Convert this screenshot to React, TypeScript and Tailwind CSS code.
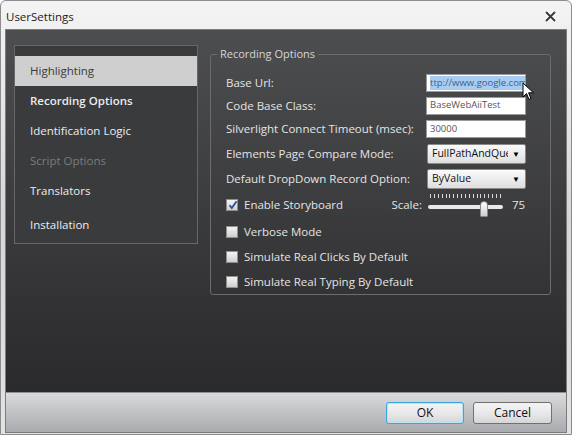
import React from 'react'

const font = { fontFamily: '"Open Sans", "Noto Sans", sans-serif' }

// Pequeña casilla de verificación estilo WPF
function Check({ checked }: { checked?: boolean }) {
  return (
    <span className="relative flex h-[12px] w-[12px] shrink-0 items-center justify-center border border-[#8f8f8f] bg-gradient-to-b from-[#f4f4f4] to-[#cfcfcf]">
      {checked && (
        <svg width="10" height="10" viewBox="0 0 10 10" className="absolute left-[1px] top-[0px]">
          <path d="M1.5 5.2 L3.8 8 L8.6 1.2" fill="none" stroke="#2a4aa8" strokeWidth="1.8" />
        </svg>
      )}
    </span>
  )
}

function TextBox({ value, selected }: { value: string; selected?: boolean }) {
  return (
    <div className="flex h-[18px] w-[100px] items-center overflow-hidden border border-[#9a9a9a] bg-white px-[3px] text-[9.5px] text-[#555]">
      {selected ? (
        <span className="whitespace-nowrap bg-[#a9cdf2] leading-[14px] text-[#3d5f86]">{value}</span>
      ) : (
        <span className="whitespace-nowrap">{value}</span>
      )}
    </div>
  )
}

function DropDown({ value }: { value: string }) {
  return (
    <div className="flex h-[20px] w-[99px] items-center justify-between rounded-[2px] border border-[#8a8a8a] bg-gradient-to-b from-[#fbfbfb] to-[#dedede] pl-[4px] pr-[5px] text-[10.5px] text-[#111]">
      <span className="mr-[4px] min-w-0 overflow-hidden whitespace-nowrap">{value}</span>
      <span className="shrink-0 text-[8px] leading-none text-black">▼</span>
    </div>
  )
}

function Row({ label, children, h }: { label: string; children: React.ReactNode; h: string }) {
  return (
    <div className={`flex items-center justify-between ${h}`}>
      <span className="whitespace-nowrap text-[#e4e4e4]">{label}</span>
      {children}
    </div>
  )
}

function NavItem({ label, active, bold, disabled }: { label: string; active?: boolean; bold?: boolean; disabled?: boolean }) {
  return (
    <div
      className={`flex h-[30px] items-center pl-[15px] text-[11.5px] ${
        active ? 'bg-[#cfcfcf] text-[#3a3a3a]' : disabled ? 'text-[#7b7b7b]' : 'text-[#ececec]'
      } ${bold ? 'font-semibold' : ''}`}
    >
      {label}
    </div>
  )
}

export default function App() {
  return (
    <div className="h-[439px] w-[572px] overflow-hidden bg-white" style={font}>
      <div className="flex h-[435px] w-[572px] flex-col rounded-t-[6px] border border-[#8c8c8c] bg-gradient-to-b from-[#f4f4f4] via-[#d6d6d6] to-[#e2e2e2]">
        {/* Barra de título */}
        <div className="flex h-[28px] shrink-0 items-center justify-between pl-[5px] pr-[15px] pt-[4px]">
          <span className="text-[11.5px] text-[#1b1b1b]">UserSettings</span>
          <svg width="11" height="11" viewBox="0 0 11 11" className="mt-[-2px]">
            <path d="M1.5 1.5 L9.5 9.5 M9.5 1.5 L1.5 9.5" stroke="#fff" strokeWidth="4" strokeLinecap="round" />
            <path d="M1.5 1.5 L9.5 9.5 M9.5 1.5 L1.5 9.5" stroke="#3a3a3a" strokeWidth="2" strokeLinecap="round" />
          </svg>
        </div>

        <div className="mx-[4px] flex flex-col border border-[#7c7c7c]">
          {/* Área oscura principal */}
          <div className="flex h-[362px] items-start gap-[12px] bg-gradient-to-b from-[#4d4e50] to-[#2a2a2c] pl-[8px] pt-[15px]">
            <div className="h-[199px] w-[184px] border border-[#666769] bg-[#3a3b3d] pt-[10px]">
              <NavItem label="Highlighting" active />
              <NavItem label="Recording Options" bold />
              <NavItem label="Identification Logic" />
              <NavItem label="Script Options" disabled />
              <NavItem label="Translators" />
              <div className="flex h-[38px] items-center pl-[15px] text-[11.5px] text-[#ececec]">Installation</div>
            </div>

            <fieldset className="mt-[1px] h-[249px] w-[341px] rounded-[3px] border border-[#6c6c6c] pl-[6px] pr-[24px] text-[11.5px]">
              <legend className="px-[3px] text-[11px] leading-[16px] text-[#d6d6d6]">Recording Options</legend>
              <div className="relative flex flex-col pl-[9px] pt-[9px]">
                <Row label="Base Url:" h="h-[23px]">
                  <TextBox value="ttp://www.google.com" selected />
                </Row>
                <Row label="Code Base Class:" h="h-[23px]">
                  <TextBox value="BaseWebAiiTest" />
                </Row>
                <Row label="Silverlight Connect Timeout (msec):" h="h-[24px]">
                  <TextBox value="30000" />
                </Row>
                <Row label="Elements Page Compare Mode:" h="h-[25px]">
                  <DropDown value="FullPathAndQuery" />
                </Row>
                <Row label="Default DropDown Record Option:" h="h-[25px]">
                  <DropDown value="ByValue" />
                </Row>

                <div className="flex h-[28px] items-center">
                  <Check checked />
                  <span className="ml-[6px] text-[#e4e4e4]">Enable Storyboard</span>
                  <span className="ml-auto mr-[6px] text-[#e4e4e4]">Scale:</span>
                  <div className="relative h-[24px] w-[75px]">
                    <div className="flex h-[5px] justify-between px-[2px] pt-[1px]">
                      {Array.from({ length: 19 }).map((_, i) => (
                        <span key={i} className="h-[4px] w-[1px] bg-[#d8d8d8]" />
                      ))}
                    </div>
                    <div className="mt-[7px] h-[4px] rounded-full bg-[#e9e9e9]" />
                    <div className="absolute left-[52px] top-[8px] h-[16px] w-[8px] rounded-t-[4px] rounded-b-[1px] border border-[#8a8a8a] bg-gradient-to-b from-[#ffffff] to-[#cfcfcf]" />
                  </div>
                  <span className="ml-[9px] w-[14px] text-[#e4e4e4]">75</span>
                </div>

                {['Verbose Mode', 'Simulate Real Clicks By Default', 'Simulate Real Typing By Default'].map(t => (
                  <div key={t} className="flex h-[25px] items-center">
                    <Check />
                    <span className="ml-[6px] text-[#e4e4e4]">{t}</span>
                  </div>
                ))}

                {/* Puntero del ratón sobre la caja de texto */}
                <svg width="13" height="19" viewBox="0 0 13 19" className="absolute left-[305px] top-[20px]">
                  <path d="M1 1 L1 15 L4.5 11.5 L7 17.5 L9 16.6 L6.6 10.8 L11.5 10.8 Z" fill="#fff" stroke="#000" strokeWidth="1" strokeLinejoin="round" />
                </svg>
              </div>
            </fieldset>
          </div>

          {/* Barra de botones */}
          <div className="flex h-[40px] items-center justify-end gap-[9px] border-t border-[#8d9096] bg-gradient-to-b from-[#dadbdd] to-[#a8aaad] pr-[14px]">
            <button className="h-[22px] w-[78px] rounded-[3px] border border-[#3aa6dc] bg-gradient-to-b from-[#f3f3f3] via-[#e9e9e9] to-[#d5d5d5] text-[12px] text-[#111] shadow-[inset_0_0_0_1px_#b9e4f8]">
              OK
            </button>
            <button className="h-[22px] w-[79px] rounded-[3px] border border-[#707070] bg-gradient-to-b from-[#f3f3f3] via-[#e9e9e9] to-[#d5d5d5] text-[12px] text-[#111]">
              Cancel
            </button>
          </div>
        </div>
      </div>
    </div>
  )
}
